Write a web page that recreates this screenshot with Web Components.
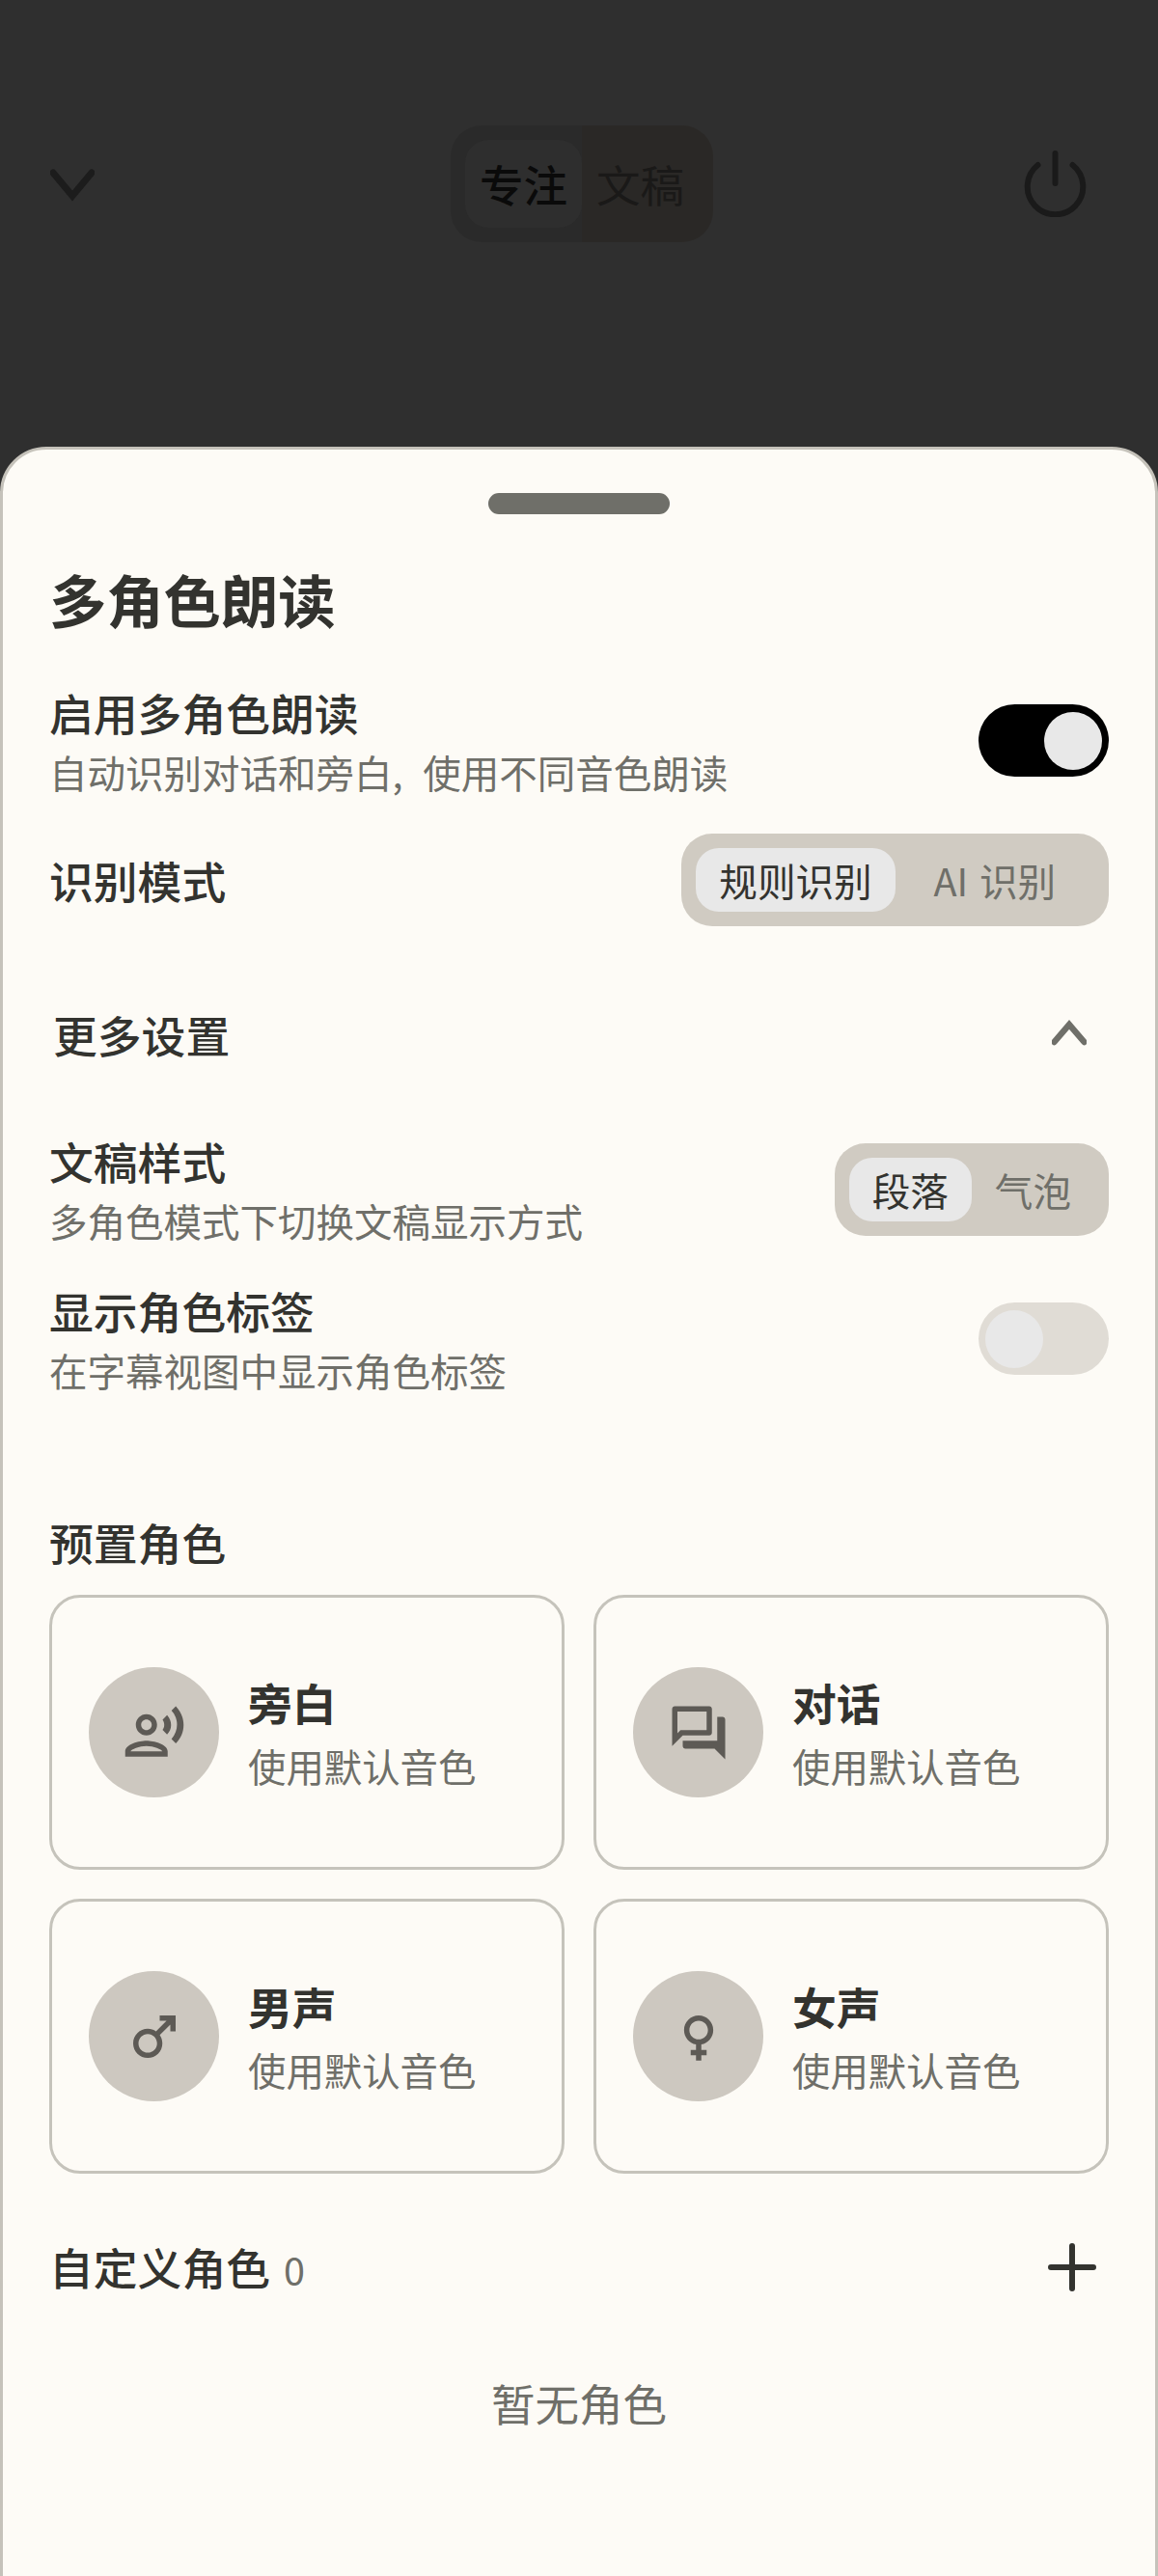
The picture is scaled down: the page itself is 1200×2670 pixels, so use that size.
<!DOCTYPE html>
<html lang="zh">
<head>
<meta charset="utf-8">
<title>多角色朗读</title>
<style>
  html, body { margin: 0; padding: 0; }
  body {
    width: 1200px;
    height: 2670px;
    overflow: hidden;
    background: #2f2f2f;
    font-family: "Noto Sans CJK SC", "Noto Sans", sans-serif;
  }
</style>
</head>
<body>
  <top-bar>
    <md-icon slot="left" name="chevronDown" size="46" style="color:#1c1c1c"></md-icon>
    <seg-control slot="center" dark>
      <seg-option active>专注</seg-option>
      <seg-option>文稿</seg-option>
    </seg-control>
    <md-icon slot="right" name="power" size="69" style="color:#1a1a1a"></md-icon>
  </top-bar>

  <bottom-sheet>
    <h-title>多角色朗读</h-title>

    <setting-row style="margin-top:56px">
      <span slot="label">启用多角色朗读</span>
      <span slot="desc">自动识别对话和旁白, 使用不同音色朗读</span>
      <toggle-switch checked></toggle-switch>
    </setting-row>

    <setting-row style="margin-top:40px">
      <span slot="label">识别模式</span>
      <seg-control>
        <seg-option active>规则识别</seg-option>
        <seg-option>AI 识别</seg-option>
      </seg-control>
    </setting-row>

    <section-head style="margin-top:62px">更多设置</section-head>

    <setting-row style="margin-top:54px">
      <span slot="label">文稿样式</span>
      <span slot="desc">多角色模式下切换文稿显示方式</span>
      <seg-control>
        <seg-option active>段落</seg-option>
        <seg-option>气泡</seg-option>
      </seg-control>
    </setting-row>

    <setting-row style="margin-top:42px">
      <span slot="label">显示角色标签</span>
      <span slot="desc">在字幕视图中显示角色标签</span>
      <toggle-switch></toggle-switch>
    </setting-row>

    <setting-row style="margin-top:127px">
      <span slot="label">预置角色</span>
    </setting-row>

    <card-grid style="margin-top:28px">
      <voice-card icon="voice" name="旁白" desc="使用默认音色"></voice-card>
      <voice-card icon="forum" name="对话" desc="使用默认音色"></voice-card>
      <voice-card icon="male" name="男声" desc="使用默认音色"></voice-card>
      <voice-card icon="female" name="女声" desc="使用默认音色"></voice-card>
    </card-grid>

    <custom-head style="margin-top:70px" count="0">自定义角色</custom-head>

    <empty-note style="margin-top:86px">暂无角色</empty-note>
  </bottom-sheet>

<script>
const ICONS = {
  voice: "M9 13c2.21 0 4-1.79 4-4s-1.79-4-4-4-4 1.79-4 4 1.79 4 4 4zm0-6c1.1 0 2 .9 2 2s-.9 2-2 2-2-.9-2-2 .9-2 2-2zm0 8c-2.67 0-8 1.34-8 4v2h16v-2c0-2.66-5.33-4-8-4zm-6 4c.22-.72 3.31-2 6-2 2.7 0 5.8 1.29 6 2H3zM15.08 7.05c.84 1.18.84 2.71 0 3.89l1.68 1.69c2.02-2.02 2.02-5.07 0-7.27l-1.68 1.69zM20.07 2l-1.63 1.63c2.77 3.02 2.77 7.56 0 10.74L20.07 16c3.9-3.89 3.91-9.95 0-14z",
  forum: "M15 4v7H5.17L4 12.17V4h11m1-2H3c-.55 0-1 .45-1 1v14l4-4h10c.55 0 1-.45 1-1V3c0-.55-.45-1-1-1zm5 4h-2v9H6v2c0 .55.45 1 1 1h11l4 4V7c0-.55-.45-1-1-1z",
  male: "M9.5 11c1.93 0 3.5 1.57 3.5 3.5S11.43 18 9.5 18 6 16.43 6 14.5 7.57 11 9.5 11zm0-2C6.46 9 4 11.46 4 14.5S6.46 20 9.5 20s5.5-2.46 5.5-5.5c0-1.16-.36-2.23-.97-3.12L18 7.42V10h2V4h-6v2h2.58l-3.97 3.97C11.73 9.36 10.66 9 9.5 9z",
  female: "M17.5 9.5C17.5 6.46 15.04 4 12 4S6.5 6.46 6.5 9.5c0 2.7 1.94 4.93 4.5 5.4V17H9v2h2v2h2v-2h2v-2h-2v-2.1c2.56-.47 4.5-2.7 4.5-5.4zm-9 0C8.5 7.57 10.07 6 12 6s3.5 1.57 3.5 3.5S13.93 13 12 13s-3.5-1.57-3.5-3.5z"
};

// stroked icons, not from the material set
const STROKES = {
  chevronDown: { box: "0 0 46 46", d: "M3 11 L23 35 L43 11", w: 7 },
  chevronUp: { box: "0 0 36 36", d: "M2.5 26 L18 8 L33.5 26", w: 6.5 },
  power: { box: "-3 0 69 69", d: "M31.5 3 V34 M13.5 15 A28.8 28.8 0 1 0 49.5 15", w: 6 },
  plus: { box: "0 0 50 50", d: "M25 3 V47 M3 25 H47", w: 6 }
};

class MdIcon extends HTMLElement {
  connectedCallback() {
    const name = this.getAttribute("name");
    const size = this.getAttribute("size") || 66;
    const root = this.shadowRoot || this.attachShadow({ mode: "open" });
    let body = "";
    let box = "0 0 24 24";
    if (STROKES[name]) {
      const s = STROKES[name];
      box = s.box;
      body = `<path d="${s.d}" fill="none" stroke="currentColor" stroke-width="${s.w}" stroke-linecap="round"/>`;
    } else {
      body = `<path d="${ICONS[name]}" fill="currentColor"/>`;
    }
    root.innerHTML = `
    <style>
    :host { display: block; width: ${size}px; height: ${size}px; flex: none; }
    svg { display: block; width: 100%; height: 100%; }
    </style>
    <svg viewBox="${box}">${body}</svg>
    `;
  }
}
customElements.define("md-icon", MdIcon);

class TopBar extends HTMLElement {
  constructor() {
    super();
    this.attachShadow({ mode: "open" }).innerHTML = `
    <style>
    :host {
      display: grid;
      grid-template-columns: 467px auto 1fr;
      grid-template-rows: 121px;
      align-items: center;
      height: 463px;
      box-sizing: border-box;
      padding-top: 130px;
    }
    .left { padding-left: 52px; }
    .right { display: flex; justify-content: flex-end; padding-right: 72px; }
    </style>
    <div class="left"><slot name="left"></slot></div>
    <slot name="center"></slot>
    <div class="right"><slot name="right"></slot></div>
    `;
  }
}
customElements.define("top-bar", TopBar);

class BottomSheet extends HTMLElement {
  constructor() {
    super();
    this.attachShadow({ mode: "open" }).innerHTML = `
    <style>
    :host {
      display: block;
      height: 2220px;
      box-sizing: border-box;
      background: #fdfbf6;
      border: 3px solid #c5c2ba;
      border-radius: 48px 48px 0 0;
      padding: 45px 48px 0;
      color: #33332f;
    }
    .handle {
      width: 188px;
      height: 22px;
      margin: 0 auto;
      border-radius: 11px;
      background: #6f6f69;
    }
    </style>
    <div class="handle"></div>
    <slot></slot>
    `;
  }
}
customElements.define("bottom-sheet", BottomSheet);

class HTitle extends HTMLElement {
  constructor() {
    super();
    this.attachShadow({ mode: "open" }).innerHTML = `
    <style>
    :host {
      display: block;
      margin-top: 52px;
      font-size: 59.3px;
      line-height: 70px;
      font-weight: 700;
    }
    </style>
    <slot></slot>
    `;
  }
}
customElements.define("h-title", HTitle);

class SettingRow extends HTMLElement {
  constructor() {
    super();
    this.attachShadow({ mode: "open" }).innerHTML = `
    <style>
    :host {
      display: flex;
      align-items: center;
      justify-content: space-between;
    }
    .label {
      font-size: 45.8px;
      line-height: 54px;
      font-weight: 500;
    }
    .desc {
      font-size: 39.5px;
      line-height: 48px;
      word-spacing: 12px;
      color: #6f6f69;
    }
    ::slotted([slot="desc"]) { display: block; margin-top: 11px; }
    </style>
    <div>
      <div class="label"><slot name="label"></slot></div>
      <div class="desc"><slot name="desc"></slot></div>
    </div>
    <slot></slot>
    `;
  }
}
customElements.define("setting-row", SettingRow);

class ToggleSwitch extends HTMLElement {
  constructor() {
    super();
    this.attachShadow({ mode: "open" }).innerHTML = `
    <style>
    :host {
      display: flex;
      width: 135px;
      height: 75px;
      box-sizing: border-box;
      padding: 7.5px 7px;
      border-radius: 38px;
      background: #e0dcd5;
      flex: none;
    }
    :host([checked]) {
      background: #000;
      justify-content: flex-end;
    }
    .thumb {
      width: 60px;
      height: 60px;
      border-radius: 50%;
      background: #e8e8e8;
    }
    </style>
    <div class="thumb"></div>
    `;
  }
}
customElements.define("toggle-switch", ToggleSwitch);

class SegControl extends HTMLElement {
  constructor() {
    super();
    this.attachShadow({ mode: "open" }).innerHTML = `
    <style>
    :host {
      display: inline-grid;
      grid-auto-flow: column;
      grid-auto-columns: 1fr;
      padding: 15px;
      border-radius: 32px;
      background: #d0cbc2;
      flex: none;
      --opt-pad: 24px;
      --opt-h: 66px;
      --opt-size: 39.6px;
      --opt-weight: 400;
      --opt-on: #e8e8e8;
      --opt-text: #33332f;
      --opt-dim: #6f6f69;
    }
    :host([dark]) {
      background: linear-gradient(90deg, #2a2a2a 50%, #2a2826 50%);
      --opt-pad: 15px;
      --opt-h: 91px;
      --opt-size: 45.5px;
      --opt-weight: 500;
      --opt-on: #2e2e2e;
      --opt-text: #0a0a0a;
      --opt-dim: #1a1918;
    }
    </style>
    <slot></slot>
    `;
  }
}
customElements.define("seg-control", SegControl);

class SegOption extends HTMLElement {
  constructor() {
    super();
    this.attachShadow({ mode: "open" }).innerHTML = `
    <style>
    :host {
      display: block;
      padding: 0 var(--opt-pad);
      border-radius: 24px;
      text-align: center;
      white-space: nowrap;
      word-spacing: 3px;
      font-size: var(--opt-size);
      line-height: var(--opt-h);
      color: var(--opt-dim);
    }
    :host([active]) {
      background: var(--opt-on);
      color: var(--opt-text);
      font-weight: var(--opt-weight);
    }
    </style>
    <slot></slot>
    `;
  }
}
customElements.define("seg-option", SegOption);

class SectionHead extends HTMLElement {
  constructor() {
    super();
    this.attachShadow({ mode: "open" }).innerHTML = `
    <style>
    :host {
      display: flex;
      align-items: center;
      justify-content: space-between;
      height: 100px;
      padding: 0 23px 0 4px;
      font-size: 45.8px;
      font-weight: 500;
    }
    md-icon { color: #6f6f69; }
    </style>
    <span><slot></slot></span>
    <md-icon name="chevronUp" size="36"></md-icon>
    `;
  }
}
customElements.define("section-head", SectionHead);

class CardGrid extends HTMLElement {
  constructor() {
    super();
    this.attachShadow({ mode: "open" }).innerHTML = `
    <style>
    :host {
      display: grid;
      grid-template-columns: 1fr 1fr;
      gap: 30px;
    }
    </style>
    <slot></slot>
    `;
  }
}
customElements.define("card-grid", CardGrid);

class VoiceCard extends HTMLElement {
  connectedCallback() {
    const root = this.shadowRoot || this.attachShadow({ mode: "open" });
    root.innerHTML = `
    <style>
    :host {
      display: flex;
      align-items: center;
      gap: 30px;
      height: 285px;
      box-sizing: border-box;
      padding-left: 38px;
      border: 3px solid #c5c3bb;
      border-radius: 32px;
    }
    .avatar {
      display: flex;
      align-items: center;
      justify-content: center;
      width: 135px;
      height: 135px;
      border-radius: 50%;
      background: #cdc8c0;
      color: #5d5a55;
      flex: none;
    }
    .name {
      font-size: 45.8px;
      line-height: 54px;
      font-weight: 700;
    }
    .desc {
      margin-top: 15px;
      font-size: 39.4px;
      line-height: 48px;
      color: #6f6f69;
    }
    </style>
    <div class="avatar"><md-icon name="${this.getAttribute("icon")}" size="66"></md-icon></div>
    <div>
      <div class="name">${this.getAttribute("name")}</div>
      <div class="desc">${this.getAttribute("desc")}</div>
    </div>
    `;
  }
}
customElements.define("voice-card", VoiceCard);

class CustomHead extends HTMLElement {
  connectedCallback() {
    const root = this.shadowRoot || this.attachShadow({ mode: "open" });
    root.innerHTML = `
    <style>
    :host {
      display: flex;
      align-items: center;
      justify-content: space-between;
      height: 54px;
      padding: 0 13px 0 0;
    }
    .title { font-size: 45.8px; line-height: 54px; font-weight: 500; }
    .count {
      margin-left: 14px;
      font-size: 39.6px;
      font-weight: 400;
      color: #6f6f69;
    }
    </style>
    <div class="title"><slot></slot><span class="count">${this.getAttribute("count")}</span></div>
    <md-icon name="plus" size="50"></md-icon>
    `;
  }
}
customElements.define("custom-head", CustomHead);

class EmptyNote extends HTMLElement {
  constructor() {
    super();
    this.attachShadow({ mode: "open" }).innerHTML = `
    <style>
    :host {
      display: block;
      text-align: center;
      font-size: 45.5px;
      line-height: 54px;
      color: #6f6f69;
    }
    </style>
    <slot></slot>
    `;
  }
}
customElements.define("empty-note", EmptyNote);
</script>
</body>
</html>
